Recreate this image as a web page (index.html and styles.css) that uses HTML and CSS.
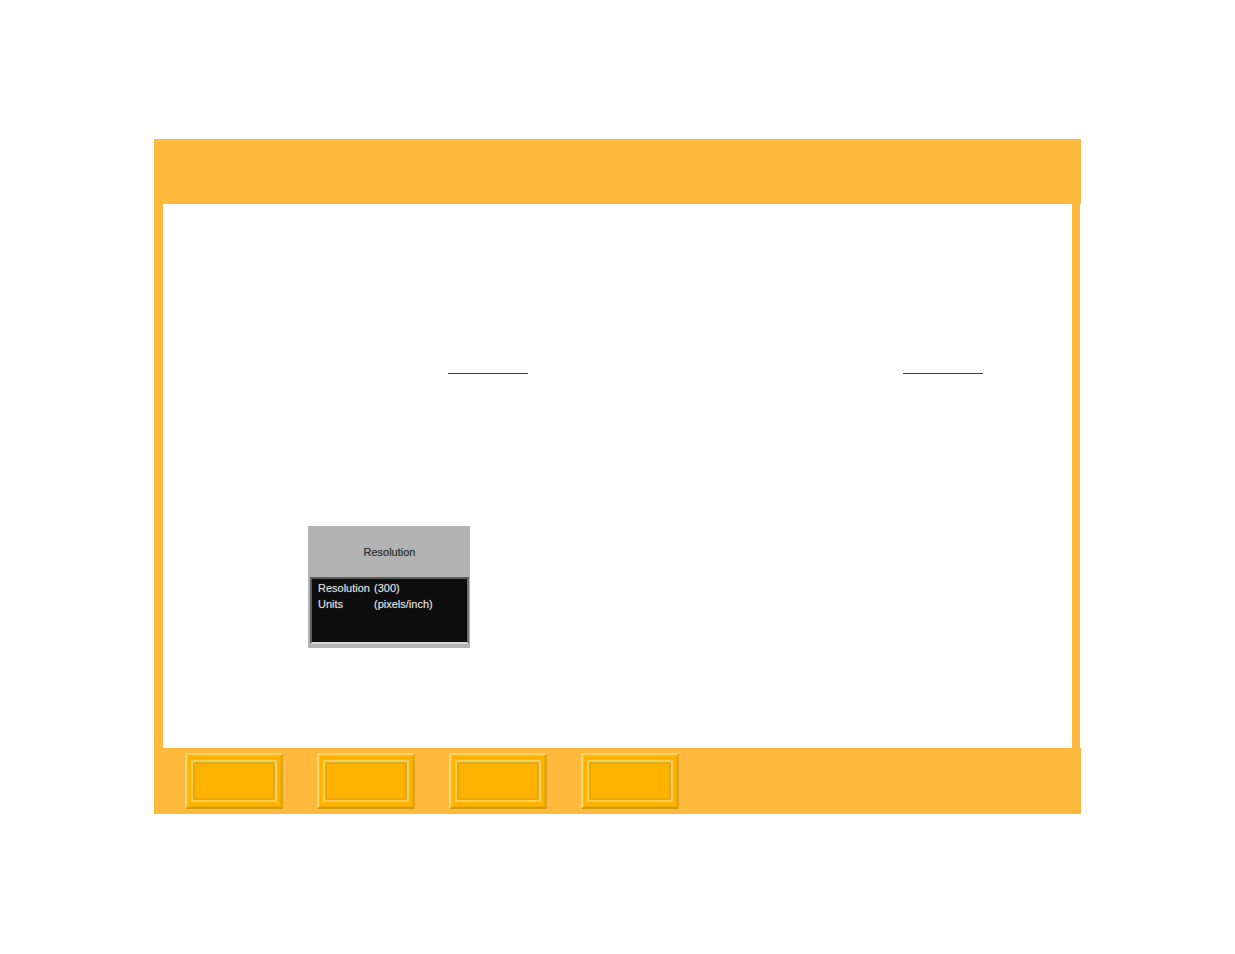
FILE: index.html
```html
<!DOCTYPE html>
<html lang="en">
    <head>
        <meta charset="UTF-8">
        <meta name="viewport" content="width=device-width, initial-scale=1.0">
        <title>Resolution</title>
        <link rel="stylesheet" href="styles.css">
    </head>

    <body>
        <div class="page">
            <header class="top"></header>

            <main class="content">
                <section class="column">
                    <a class="ref" href="#resolution" aria-label="Resolution"></a>
                    <div class="panel" id="resolution">
                        <h1 class="panel-title">Resolution</h1>
                        <dl class="panel-screen">
                            <dt>Resolution</dt>
                            <dd>(300)</dd>
                            <dt>Units</dt>
                            <dd>(pixels/inch)</dd>
                        </dl>
                    </div>
                </section>
                <section class="column">
                    <a class="ref" href="#units" aria-label="Units"></a>
                </section>
            </main>

            <footer class="nav">
                <button class="nav-button" type="button" aria-label="Contents"><span></span></button>
                <button class="nav-button" type="button" aria-label="Index"><span></span></button>
                <button class="nav-button" type="button" aria-label="Back"><span></span></button>
                <button class="nav-button" type="button" aria-label="Next"><span></span></button>
            </footer>
        </div>
    </body>
</html>
```

FILE: styles.css
```css
* {
    box-sizing: border-box;
}

body {
    margin: 0;
    padding: 139px 154px;
    background: white;
    font-family: "Liberation Sans", Arial, sans-serif;
    font-size: 11px;
    line-height: 16px;
}

.top {
    height: 65px;
    background: #ffb93c;
}

.content {
    display: grid;
    grid-template-columns: 1fr 1fr;
    min-height: 544px;
    margin-right: 1px;
    padding-bottom: 100px;
    border: solid #ffb93c;
    border-width: 0 8px 0 9px;
}

.column {
    padding: 150px 0 0 145px;
}

/* cross references, only the underline shows */
.ref {
    display: block;
    width: 80px;
    height: 20px;
    margin-left: 140px;
    border-bottom: 1px solid #1135dc;
}

.panel {
    width: 162px;
    margin-top: 152px;
    padding: 0 1px 4px 2px;
    background: #b3b3b3;
}

.panel-title {
    margin: 0;
    padding: 18px 0 17px;
    color: #333;
    font-size: 11px;
    font-weight: normal;
    text-align: center;
    text-shadow: 0 0 1px #3338;
}

.panel-screen {
    display: grid;
    grid-template-columns: 56px 1fr;
    align-content: start;
    min-height: 67px;
    margin: 0;
    padding: 1px 0 0 6px;
    border: 2px solid;
    border-color: #5c5c5c #6e6e6e #d8d8d8 #5c5c5c;
    background: #0d0d0d;
    color: #ddd;
    text-shadow: 0 0 1px #ddd8;
}

.panel-screen dd {
    margin: 0;
}

.nav {
    display: flex;
    gap: 34px;
    padding: 5px 31px;
    background: #ffb93c;
}

.nav-button {
    width: 98px;
    height: 56px;
    padding: 5px 4px;
    border: 2px solid;
    border-color: #fbd465 #dea51c #cf9c10 #f6d774;
    background: #ffb200;
    box-shadow: inset 1px 1px 0 #fdbe20, inset -1px -1px 0 #f3aa00;
    cursor: pointer;
}

/* light ridge with a soft groove inside it */
.nav-button span {
    display: block;
    height: 42px;
    border: 2px solid #f8cf52;
    box-shadow: inset 0 0 0 1px #d9ac2c, inset 0 0 0 2px #eba604;
}
```
